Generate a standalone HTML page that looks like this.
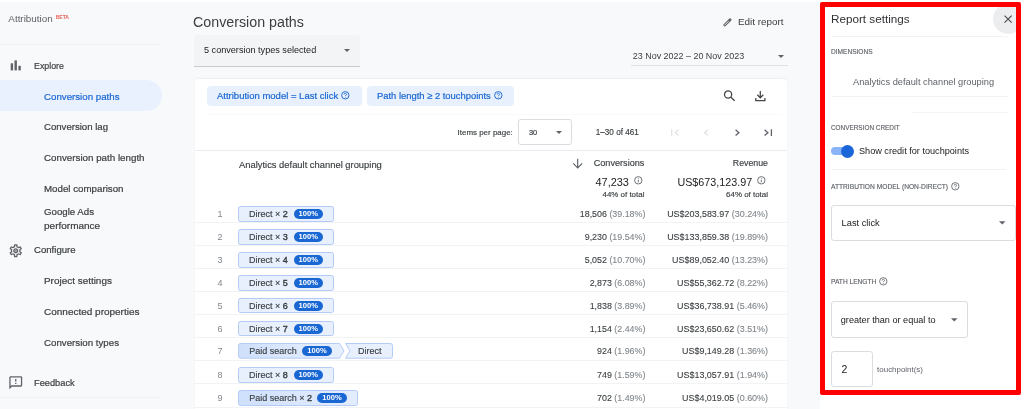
<!DOCTYPE html>
<html>
<head>
<meta charset="utf-8">
<title>Attribution - Conversion paths</title>
<style>
*{box-sizing:border-box;margin:0;padding:0}
html,body{width:1024px;height:409px;overflow:hidden;background:#f8f9fa;font-family:"Liberation Sans",sans-serif;color:#202124}
#root{will-change:transform;position:relative;width:1024px;height:409px;overflow:hidden;background:#f8f9fa}
.t{position:absolute;white-space:nowrap;line-height:12px;font-size:9.5px;color:#202124;transform-origin:left center}
.r{text-align:right}
.g{color:#5f6368}
.lg{color:#80868b}
.hl{position:absolute;background:#e8eaed;height:1px}
svg{position:absolute;overflow:visible}
/* sidebar */
.nav{font-size:9.6px;color:#3c4043;-webkit-text-stroke-width:.2px}
#sel{position:absolute;left:0;top:80.400px;width:162px;height:30.500px;background:#eaf1fe;border-radius:0 16px 16px 0}
/* card */
#card{position:absolute;left:194.500px;top:78.500px;width:592.500px;height:340px;background:#fff;border-radius:4px;box-shadow:0 -1px 2px rgba(60,64,67,.06)}
.chipf{position:absolute;top:86px;height:20px;background:#e8f0fe;border-radius:4px}
.chipf .t{color:#1967d2;font-size:9.5px;top:4.2px;-webkit-text-stroke-width:.2px}
/* path chips */
.pc{position:absolute;height:15.5px;background:#e8f0fe;border:1px solid #b4cbf7;border-radius:2.5px}
.pc.dk{background:linear-gradient(90deg,#cfe0fc,#e4edfd)}
.bd{position:absolute;height:10px;border-radius:5px;background:#1967d2;color:#fff;font-size:7.6px;font-weight:bold;line-height:10px;text-align:center}
.num{font-size:9px;color:#80868b}
.ct{font-size:9px;color:#3c4043;-webkit-text-stroke-width:.15px}
.ct b{font-weight:normal;-webkit-text-stroke-width:.38px}
.val{font-size:8.9px;color:#3c4043;-webkit-text-stroke-width:.1px}
.val i{font-style:normal;color:#80868b}
.rowl{position:absolute;left:194px;width:593px;height:1px;background:#f2f3f5}
/* right panel */
#panel{position:absolute;left:820px;top:0;width:204px;height:409px;background:#fff}
#red{position:absolute;left:820.2px;top:2px;width:200.500px;height:393.400px;border:5px solid #f00;border-radius:2px}
.cap{font-size:7.2px;color:#5f6368;-webkit-text-stroke-width:.15px;transform:scaleX(.9)}
.box{position:absolute;border:1px solid #dadce0;border-radius:3px;background:#fff}
</style>
</head>
<body>
<div id="root">

<div style="position:absolute;left:0;top:0;width:1024px;height:2px;background:#fff"></div>
<!-- ============ SIDEBAR ============ -->
<div id="sidebar">
  <span class="t" style="left:8.3px;top:13.2px;font-size:9.9px;color:#5f6368">Attribution</span>
  <span class="t" style="left:55.7px;top:11.3px;font-size:5px;color:#e8665a;font-weight:bold">BETA</span>
  <div class="hl" style="left:0;top:44px;width:160px;background:#f0f2f3"></div>
  <div id="sel"></div>
  <span class="t nav" style="left:34px;top:59.6px;transform:scaleX(0.919)">Explore</span>
  <span class="t nav" style="left:44px;top:90.5px;color:#1967d2;transform:scaleX(1.011)">Conversion paths</span>
  <span class="t nav" style="left:44px;top:121px">Conversion lag</span>
  <span class="t nav" style="left:44px;top:151.5px;transform:scaleX(1.019)">Conversion path length</span>
  <span class="t nav" style="left:44px;top:182.8px;transform:scaleX(1.014)">Model comparison</span>
  <span class="t nav" style="left:44px;top:206.4px;transform:scaleX(1.008)">Google Ads</span>
  <span class="t nav" style="left:44px;top:219.5px;transform:scaleX(1.043)">performance</span>
  <span class="t nav" style="left:34px;top:244.2px;transform:scaleX(1.0)">Configure</span>
  <span class="t nav" style="left:44px;top:275.1px;transform:scaleX(1.035)">Project settings</span>
  <span class="t nav" style="left:44px;top:306.2px;transform:scaleX(1.041)">Connected properties</span>
  <span class="t nav" style="left:44px;top:336.5px;transform:scaleX(1.012)">Conversion types</span>
  <span class="t nav" style="left:34px;top:376.6px;transform:scaleX(0.966)">Feedback</span>
  <div class="hl" style="left:0;top:397px;width:161px;background:#f0f2f3"></div>

  <!-- explore bars -->
  <svg style="left:0;top:0" width="30" height="409" viewBox="0 0 30 409">
    <rect x="10.7" y="63.3" width="2.4" height="7.1" fill="#5f6368"/>
    <rect x="14.5" y="60.4" width="2.4" height="10" fill="#5f6368"/>
    <rect x="18.4" y="65.8" width="2.4" height="4.6" fill="#5f6368"/>
  </svg>
  <!-- gear -->
  <svg style="left:7.85px;top:242.6px" width="15.5" height="15.5" viewBox="0 0 24 24"><path fill="#5f6368" d="M19.43 12.98c.04-.32.07-.64.07-.98 0-.34-.03-.66-.07-.98l2.11-1.65c.19-.15.24-.42.12-.64l-2-3.46c-.09-.16-.26-.25-.44-.25-.06 0-.12.01-.17.03l-2.49 1c-.52-.4-1.08-.73-1.69-.98l-.38-2.65C14.46 2.180 14.250 2 14 2h-4c-.25 0-.46.18-.49.42l-.38 2.650c-.61.25-1.170.59-1.690.98l-2.490-1c-.06-.02-.12-.03-.18-.03-.17 0-.34.09-.43.25l-2 3.460c-.13.22-.07.49.12.64l2.110 1.650c-.04.32-.07.65-.07.98 0 .33.03.66.07.98l-2.110 1.650c-.19.15-.24.42-.12.64l2 3.460c.09.16.26.25.44.25.06 0 .12-.01.17-.03l2.490-1c.52.4 1.080.73 1.690.98l.38 2.650c.03.24.24.42.49.42h4c.25 0 .46-.18.49-.42l.38-2.650c.61-.25 1.170-.59 1.690-.98l2.490 1c.06.02.12.03.18.03.17 0 .34-.09.43-.25l2-3.460c.12-.22.07-.49-.12-.64l-2.110-1.650zm-1.980-1.710c.04.31.05.52.05.73 0 .21-.02.43-.05.73l-.14 1.130.89.7 1.080.84-.7 1.210-1.270-.51-1.040-.42-.9.68c-.43.32-.84.56-1.250.73l-1.060.43-.16 1.130-.2 1.350h-1.400l-.19-1.350-.16-1.130-1.060-.43c-.43-.18-.83-.41-1.230-.71l-.91-.7-1.060.43-1.270.51-.7-1.210 1.080-.84.89-.7-.14-1.130c-.03-.31-.05-.54-.05-.74s.02-.43.05-.73l.14-1.130-.89-.7-1.080-.84.7-1.210 1.270.51 1.040.42.9-.68c.43-.32.84-.56 1.250-.73l1.060-.43.16-1.130.2-1.350h1.390l.19 1.350.16 1.130 1.060.43c.43.18.83.41 1.230.71l.91.7 1.060-.43 1.270-.51.7 1.210-1.070.85-.89.7.14 1.130zM12 8c-2.210 0-4 1.790-4 4s1.790 4 4 4 4-1.790 4-4-1.790-4-4-4zm0 6c-1.100 0-2-.9-2-2s.9-2 2-2 2 .9 2 2-.9 2-2 2z"/><circle cx="12" cy="12" r="2.300" fill="#5f6368" opacity=".55"/></svg>
  <!-- feedback -->
  <svg style="left:7.8px;top:374.5px" width="15.5" height="15.5" viewBox="0 0 24 24"><path fill="#5f6368" d="M20 2H4c-1.100 0-1.990.9-1.990 2L2 22l4-4h14c1.100 0 2-.9 2-2V4c0-1.100-.9-2-2-2zm0 14H5.170l-.59.59-.58.58V4h16v12zm-9-4h2v2h-2zm0-6h2v4h-2z"/></svg>
</div>

<!-- ============ MAIN ============ -->
<div id="main">
  <span class="t" style="left:193px;top:14.3px;font-size:14.25px;line-height:16px;color:#3c4043">Conversion paths</span>
  <div style="position:absolute;left:193.600px;top:34.500px;width:166.600px;height:32.800px;background:#f3f4f6;border-bottom:1px solid #c9ccd0;border-radius:3px 3px 0 0"></div>
  <span class="t" style="left:204px;top:44px;font-size:9.1px">5 conversion types selected</span>
  <span class="t g" style="left:738px;top:16.2px;font-size:9.9px;color:#3c4043">Edit report</span>
  <span class="t" style="left:632.8px;top:49.7px;font-size:8.95px;color:#3c4043">23 Nov 2022 – 20 Nov 2023</span>
  <div class="hl" style="left:631.400px;top:65px;width:157px;background:#dfe1e4"></div>

  <div id="card"></div>
  <div class="chipf" style="left:206.8px;width:155px"><span class="t" style="left:10.2px">Attribution model = Last click</span></div>
  <div class="chipf" style="left:366.8px;width:147.300px"><span class="t" style="left:10.2px;transform:scaleX(.989)">Path length ≥ 2 touchpoints</span></div>
  <div class="hl" style="left:207px;top:114px;width:575px;background:#fafafb"></div>

  <span class="t" style="-webkit-text-stroke-width:.15px;left:457.6px;top:127px;font-size:7.95px;color:#3c4043">Items per page:</span>
  <div class="box" style="left:518.2px;top:119.2px;width:54.300px;height:26px"></div>
  <span class="t" style="left:528.8px;top:127px;font-size:7.8px;transform:scaleX(.95);-webkit-text-stroke-width:.2px;color:#3c4043">30</span>
  <span class="t" style="-webkit-text-stroke-width:.15px;left:595.8px;top:127px;font-size:8.15px;color:#3c4043">1–30 of 461</span>
  <div class="hl" style="left:194.500px;top:150px;width:592.500px;background:#eaecef"></div>

  <span class="t" style="-webkit-text-stroke-width:.15px;left:239px;top:159px;font-size:9.4px;color:#3c4043">Analytics default channel grouping</span>
  <span class="t r" style="-webkit-text-stroke-width:.15px;right:379.6px;top:157.4px;font-size:9.15px;color:#3c4043">Conversions</span>
  <span class="t r" style="-webkit-text-stroke-width:.15px;right:256px;top:157.4px;font-size:8.8px;color:#3c4043">Revenue</span>
  <span class="t" style="left:595.5px;top:175.5px;font-size:10.95px;color:#202124">47,233</span>
  <span class="t" style="left:677.4px;top:175.5px;font-size:10.75px;color:#202124">US$673,123.97</span>
  <span class="t r" style="-webkit-text-stroke-width:.15px;right:379.6px;top:188.5px;font-size:7.95px;color:#3c4043">44% of total</span>
  <span class="t r" style="-webkit-text-stroke-width:.15px;right:256px;top:188.5px;font-size:7.95px;color:#3c4043">64% of total</span>

  <!-- pencil -->
  <svg style="left:716px;top:12px" width="30" height="20" viewBox="0 0 30 20"><path d="M8.700 13.100L14.100 7.700" stroke="#5f6368" stroke-width="2.700" stroke-linecap="round" fill="none"/><path d="M8.800 13L12.400 9.400" stroke="#f1f2f3" stroke-width=".9" stroke-linecap="round" fill="none"/></svg>
  <!-- dropdown arrows -->
  <svg style="left:343.7px;top:48.6px" width="6" height="3.2" viewBox="0 0 10 5"><path d="M0 0h10L5 5z" fill="#5f6368"/></svg>
  <svg style="left:778px;top:54.7px" width="6" height="3.2" viewBox="0 0 10 5"><path d="M0 0h10L5 5z" fill="#5f6368"/></svg>
  <svg style="left:555.8px;top:131.4px" width="6" height="3.2" viewBox="0 0 10 5"><path d="M0 0h10L5 5z" fill="#5f6368"/></svg>
  <!-- help icons on chips -->
  <svg style="left:341px;top:90.9px" width="8.6" height="8.6" viewBox="0 0 20 20"><circle cx="10" cy="10" r="8.6" fill="none" stroke="#1967d2" stroke-width="2.2"/><path d="M7.200 8.100c0-1.600 1.200-2.700 2.800-2.700s2.800 1 2.800 2.500c0 1.900-2.700 2.100-2.700 4.100" fill="none" stroke="#1967d2" stroke-width="2"/><circle cx="10.100" cy="14.600" r="1.100" fill="#1967d2"/></svg>
  <svg style="left:493.500px;top:90.9px" width="8.6" height="8.6" viewBox="0 0 20 20"><circle cx="10" cy="10" r="8.6" fill="none" stroke="#1967d2" stroke-width="2.2"/><path d="M7.200 8.100c0-1.600 1.200-2.700 2.800-2.700s2.800 1 2.800 2.500c0 1.900-2.700 2.100-2.700 4.100" fill="none" stroke="#1967d2" stroke-width="2"/><circle cx="10.100" cy="14.600" r="1.100" fill="#1967d2"/></svg>
  <!-- search -->
  <svg style="left:720px;top:86px" width="20" height="20" viewBox="0 0 20 20"><circle cx="8.100" cy="8.500" r="3.600" fill="none" stroke="#444746" stroke-width="1.250"/><path d="M10.700 11.100L14.600 14.800" stroke="#444746" stroke-width="1.350" fill="none"/></svg>
  <!-- download -->
  <svg style="left:750px;top:86px" width="20" height="20" viewBox="0 0 20 20"><path d="M10.300 5V11.600M7.300 8.800L10.300 11.800L13.300 8.800M5.800 11.900V14.700H14.900V11.900" stroke="#444746" stroke-width="1.250" fill="none"/></svg>
  <!-- paginator icons -->
  <svg style="left:660px;top:118px" width="120" height="30" viewBox="0 0 120 30">
    <g fill="none" stroke="#e1e3e6" stroke-width="1.300"><path d="M11.700 11.300V18"/><path d="M18.400 11.750L15.100 14.650L18.400 17.550"/><path d="M47.800 11.750L44.500 14.650L47.800 17.550"/></g>
    <g fill="none" stroke="#5f6368" stroke-width="1.300"><path d="M75.600 11.750L78.900 14.650L75.600 17.550"/><path d="M104.600 11.750L107.900 14.650L104.600 17.550"/><path d="M111.400 11.300V18"/></g>
  </svg>
  <!-- sort arrow -->
  <svg style="left:572px;top:158px" width="12" height="12" viewBox="0 0 12 12"><path d="M5.700 .8V9.600M1.200 5.400L5.700 9.900L10.200 5.400" fill="none" stroke="#5f6368" stroke-width="1.150"/></svg>
  <!-- info icons -->
  <svg style="left:634.2px;top:176.300px" width="8.600" height="8.600" viewBox="0 0 20 20"><circle cx="10" cy="10" r="8.600" fill="none" stroke="#5f6368" stroke-width="2.100"/><path d="M10 8.800V14.600" stroke="#5f6368" stroke-width="2.100"/><circle cx="10" cy="6" r="1.150" fill="#5f6368"/></svg>
  <svg style="left:757.4px;top:176.300px" width="8.600" height="8.600" viewBox="0 0 20 20"><circle cx="10" cy="10" r="8.600" fill="none" stroke="#5f6368" stroke-width="2.100"/><path d="M10 8.800V14.600" stroke="#5f6368" stroke-width="2.100"/><circle cx="10" cy="6" r="1.150" fill="#5f6368"/></svg>
  <div id="rows">
<!-- row 1 -->
<div class="rowl" style="top:222.4px"></div>
<span class="t num" style="left:217.4px;top:208.1px">1</span>
<div class="pc" style="left:238px;top:206.2px;width:96px"></div>
<span class="t ct" style="left:249px;top:208.1px">Direct × <b>2</b></span>
<span class="bd" style="left:293.5px;top:209.1px;width:29.5px">100%</span>
<span class="t r val" style="right:378.600px;top:208.1px">18,506 <i>(39.18%)</i></span>
<span class="t r val" style="font-size:8.950px;right:256px;top:208.1px">US$203,583.97 <i>(30.24%)</i></span>
<!-- row 2 -->
<div class="rowl" style="top:245.3px"></div>
<span class="t num" style="left:217.4px;top:231px">2</span>
<div class="pc" style="left:238px;top:229.1px;width:96px"></div>
<span class="t ct" style="left:249px;top:231px">Direct × <b>3</b></span>
<span class="bd" style="left:293.5px;top:232px;width:29.5px">100%</span>
<span class="t r val" style="right:378.600px;top:231px">9,230 <i>(19.54%)</i></span>
<span class="t r val" style="font-size:8.950px;right:256px;top:231px">US$133,859.38 <i>(19.89%)</i></span>
<!-- row 3 -->
<div class="rowl" style="top:268.2px"></div>
<span class="t num" style="left:217.4px;top:254px">3</span>
<div class="pc" style="left:238px;top:252.1px;width:96px"></div>
<span class="t ct" style="left:249px;top:254px">Direct × <b>4</b></span>
<span class="bd" style="left:293.5px;top:255px;width:29.5px">100%</span>
<span class="t r val" style="right:378.600px;top:254px">5,052 <i>(10.70%)</i></span>
<span class="t r val" style="font-size:8.950px;right:256px;top:254px">US$89,052.40 <i>(13.23%)</i></span>
<!-- row 4 -->
<div class="rowl" style="top:291.1px"></div>
<span class="t num" style="left:217.4px;top:276.9px">4</span>
<div class="pc" style="left:238px;top:275.0px;width:96px"></div>
<span class="t ct" style="left:249px;top:276.9px">Direct × <b>5</b></span>
<span class="bd" style="left:293.5px;top:277.9px;width:29.5px">100%</span>
<span class="t r val" style="right:378.600px;top:276.9px">2,873 <i>(6.08%)</i></span>
<span class="t r val" style="font-size:8.950px;right:256px;top:276.9px">US$55,362.72 <i>(8.22%)</i></span>
<!-- row 5 -->
<div class="rowl" style="top:314.0px"></div>
<span class="t num" style="left:217.4px;top:299.7px">5</span>
<div class="pc" style="left:238px;top:297.8px;width:96px"></div>
<span class="t ct" style="left:249px;top:299.7px">Direct × <b>6</b></span>
<span class="bd" style="left:293.5px;top:300.7px;width:29.5px">100%</span>
<span class="t r val" style="right:378.600px;top:299.7px">1,838 <i>(3.89%)</i></span>
<span class="t r val" style="font-size:8.950px;right:256px;top:299.7px">US$36,738.91 <i>(5.46%)</i></span>
<!-- row 6 -->
<div class="rowl" style="top:336.9px"></div>
<span class="t num" style="left:217.4px;top:322.6px">6</span>
<div class="pc" style="left:238px;top:320.7px;width:96px"></div>
<span class="t ct" style="left:249px;top:322.6px">Direct × <b>7</b></span>
<span class="bd" style="left:293.5px;top:323.6px;width:29.5px">100%</span>
<span class="t r val" style="right:378.600px;top:322.6px">1,154 <i>(2.44%)</i></span>
<span class="t r val" style="font-size:8.950px;right:256px;top:322.6px">US$23,650.62 <i>(3.51%)</i></span>
<!-- row 7 -->
<div class="rowl" style="top:359.8px"></div>
<span class="t num" style="left:217.4px;top:345.3px">7</span>
<svg style="left:238px;top:343.4px" width="156" height="15.700" viewBox="0 0 156 16" preserveAspectRatio="none"><defs><linearGradient id="pg7" x1="0" x2="1" y1="0" y2="0"><stop offset="0" stop-color="#cfe0fc"/><stop offset="1" stop-color="#e8f0fe"/></linearGradient></defs><path d="M2.5 .5H101.5L106 8L101.5 15.5H2.5Q.5 15.5 .5 13.5V2.5Q.5 .5 2.5 .5Z" fill="url(#pg7)" stroke="#b4cbf7"/><path d="M107.5 .5H152.5Q154.5 .5 154.5 2.5V13.5Q154.5 15.5 152.5 15.5H107.5L112 8Z" fill="#e8f0fe" stroke="#b4cbf7"/></svg>
<span class="t ct" style="left:249.3px;top:345.3px">Paid search</span>
<span class="bd" style="left:302px;top:346.3px;width:30px">100%</span>
<span class="t ct" style="left:358px;top:345.3px">Direct</span>
<span class="t r val" style="right:378.600px;top:345.3px">924 <i>(1.96%)</i></span>
<span class="t r val" style="font-size:8.950px;right:256px;top:345.3px">US$9,149.28 <i>(1.36%)</i></span>
<!-- row 8 -->
<div class="rowl" style="top:383.4px"></div>
<span class="t num" style="left:217.4px;top:369.1px">8</span>
<div class="pc" style="left:238px;top:367.2px;width:96px"></div>
<span class="t ct" style="left:249px;top:369.1px">Direct × <b>8</b></span>
<span class="bd" style="left:293.5px;top:370.1px;width:29.5px">100%</span>
<span class="t r val" style="right:378.600px;top:369.1px">749 <i>(1.59%)</i></span>
<span class="t r val" style="font-size:8.950px;right:256px;top:369.1px">US$13,057.91 <i>(1.94%)</i></span>
<!-- row 9 -->
<div class="rowl" style="top:406.9px"></div>
<span class="t num" style="left:217.4px;top:392.3px">9</span>
<div class="pc dk" style="left:238px;top:390.4px;width:120px"></div>
<span class="t ct" style="left:249.3px;top:392.3px">Paid search × <b>2</b></span>
<span class="bd" style="left:317px;top:393.3px;width:30px">100%</span>
<span class="t r val" style="right:378.600px;top:392.3px">702 <i>(1.49%)</i></span>
<span class="t r val" style="font-size:8.950px;right:256px;top:392.3px">US$4,019.05 <i>(0.60%)</i></span>
</div><!--/rows-->
</div>

<!-- ============ RIGHT PANEL ============ -->
<div id="panel"></div>
<div id="rp">
  <div style="position:absolute;left:990px;top:0;width:28px;height:40px;overflow:hidden"><div style="position:absolute;left:3px;top:3.500px;width:30px;height:30px;border-radius:15px;background:#ebedef"></div></div>
  <span class="t" style="left:831px;top:12px;font-size:11.7px;line-height:13px;color:#303134">Report settings</span>
  <div class="hl" style="left:831px;top:36px;width:177px;background:#f2f3f5"></div>
  <span class="t cap" style="left:831px;top:46px;transform:scaleX(.914)">DIMENSIONS</span>
  <span class="t g" style="left:853px;top:76.2px;font-size:9.28px">Analytics default channel grouping</span>
  <div class="hl" style="left:831px;top:96px;width:177px;background:#f2f3f5"></div>
  <div class="hl" style="left:912px;top:112px;width:96px;background:#f3f4f5"></div>
  <span class="t cap" style="left:831px;top:121.6px;transform:scaleX(.89)">CONVERSION CREDIT</span>
  <span class="t" style="left:859px;top:145.1px;font-size:9.15px">Show credit for touchpoints</span>
  <div class="hl" style="left:831px;top:169px;width:175px;background:#f2f3f5"></div>
  <span class="t cap" style="left:831px;top:180.6px;transform:scaleX(.925)">ATTRIBUTION MODEL (NON-DIRECT)</span>
  <div class="box" style="left:830.5px;top:204.5px;width:185px;height:36px"></div>
  <span class="t" style="left:841.6px;top:216.9px;font-size:9.25px">Last click</span>
  <span class="t cap" style="left:831px;top:275.6px;transform:scaleX(.92)">PATH LENGTH</span>
  <div class="box" style="left:830.5px;top:301px;width:137.5px;height:37px"></div>
  <span class="t" style="left:840.8px;top:314.1px;font-size:9.12px">greater than or equal to</span>
  <div class="box" style="left:830.5px;top:350.5px;width:42px;height:36.5px"></div>
  <span class="t" style="left:841.4px;top:363.3px;font-size:10.5px">2</span>
  <span class="t g" style="left:877.1px;top:364.1px;font-size:7.95px">touchpoint(s)</span>

  <!-- close X -->
  <svg style="left:1003.900px;top:14.500px" width="8.200" height="8.200" viewBox="0 0 9 9"><path d="M.6 .6L8.400 8.400M8.400 .6L.6 8.400" stroke="#4a4d51" stroke-width="1.250" fill="none"/></svg>
  <!-- toggle -->
  <div style="position:absolute;left:831px;top:147px;width:22px;height:8.200px;border-radius:4.100px;background:#8ab4f8"></div>
  <div style="position:absolute;left:841.300px;top:144.600px;width:13px;height:13px;border-radius:6.500px;background:#1a66d8"></div>
  <!-- help icons -->
  <svg style="left:950.600px;top:181.600px" width="8.600" height="8.600" viewBox="0 0 20 20"><circle cx="10" cy="10" r="8.600" fill="none" stroke="#5f6368" stroke-width="2"/><path d="M7.200 8.100c0-1.600 1.200-2.700 2.800-2.700s2.800 1 2.800 2.500c0 1.900-2.700 2.100-2.700 4.100" fill="none" stroke="#5f6368" stroke-width="1.900"/><circle cx="10.100" cy="14.600" r="1.100" fill="#5f6368"/></svg>
  <svg style="left:879px;top:276.800px" width="8.600" height="8.600" viewBox="0 0 20 20"><circle cx="10" cy="10" r="8.600" fill="none" stroke="#5f6368" stroke-width="2"/><path d="M7.200 8.100c0-1.600 1.200-2.700 2.800-2.700s2.800 1 2.800 2.500c0 1.900-2.700 2.100-2.700 4.100" fill="none" stroke="#5f6368" stroke-width="1.900"/><circle cx="10.100" cy="14.600" r="1.100" fill="#5f6368"/></svg>
  <!-- select arrows -->
  <svg style="left:999.400px;top:221.300px" width="6.500" height="3.500" viewBox="0 0 10 5"><path d="M0 0h10L5 5z" fill="#5f6368"/></svg>
  <svg style="left:950.500px;top:318.400px" width="6.500" height="3.500" viewBox="0 0 10 5"><path d="M0 0h10L5 5z" fill="#5f6368"/></svg>
</div>
<div id="red"></div>

</div>
</body>
</html>
